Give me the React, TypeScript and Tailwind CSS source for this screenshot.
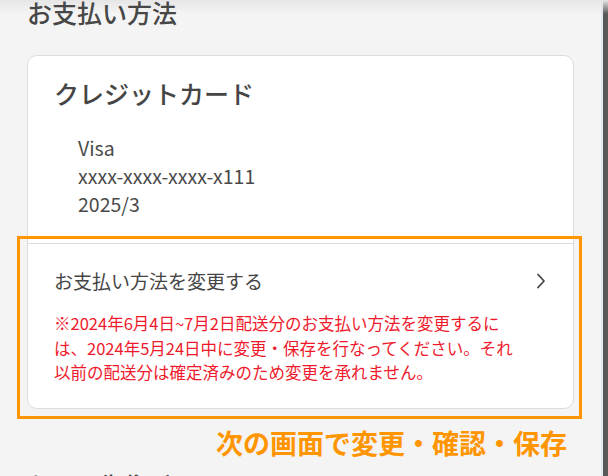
import * as React from 'react';

const Chevron = () => (
  <svg width="10" height="16" viewBox="0 0 10 16" fill="none" className="shrink-0">
    <path d="M2 1.5 L8 8 L2 14.5" stroke="#444" strokeWidth="1.8" strokeLinecap="round" strokeLinejoin="round" />
  </svg>
);

export default function App() {
  return (
    <div
      className="relative flex h-[476px] w-[608px] overflow-hidden bg-[#f4f4f4] text-[#444]"
      style={{ fontFamily: '"Noto Sans CJK JP", "Noto Sans", sans-serif' }}
    >
      <div className="pointer-events-none absolute inset-x-0 top-0 h-[14px] bg-gradient-to-b from-[#e6e6e6] to-transparent" />

      <main className="relative flex-1 px-[27px]">
        <h1 className="-mt-[2px] text-[25px] font-medium leading-[29px] text-[#474747]">お支払い方法</h1>

        <section className="mt-[28px] rounded-[10px] border border-[#dcdcdc] bg-white">
          <div className="px-[26px] pt-[21px] pb-[25px]">
            <h2 className="text-[25px] font-medium leading-[32px] text-[#454545]">クレジットカード</h2>
            <div className="mt-[25px] pl-[24px] text-[19.5px] leading-[28px] text-[#4a4a4a]">
              <p>Visa</p>
              <p>xxxx-xxxx-xxxx-x111</p>
              <p>2025/3</p>
            </div>
          </div>

          <div className="border-t border-[#dddddd] px-[26px] pt-[24px] pb-[23px]">
            <a href="#" className="flex items-center justify-between pr-[1px]">
              <span className="text-[19px] leading-[26px] text-[#454545]">お支払い方法を変更する</span>
              <Chevron />
            </a>
            <p className="mt-[17px] text-[16.5px] leading-[24.5px] text-[#ee1a2c]">
              ※2024年6月4日~7月2日配送分のお支払い方法を変更するに
              <br />
              は、2024年5月24日中に変更・保存を行なってください。それ
              <br />
              以前の配送分は確定済みのため変更を承れません。
            </p>
          </div>
        </section>

        <p className="mt-[17px] pr-[7px] text-right text-[27px] font-bold leading-[34px] text-[#ff9500]">
          次の画面で変更・確認・保存
        </p>

        <h2 className="mt-[9px] text-[24px] font-medium leading-[32px] text-[#474747]">お届け先住所</h2>

        <div className="pointer-events-none absolute left-[17px] top-[236px] h-[183px] w-[565px] border-[3px] border-[#ff9500]" />
      </main>

      <div className="w-[2px] bg-[#e4e8f0]" />
      <div className="w-[5px] bg-[#595959]" />
    </div>
  );
}
